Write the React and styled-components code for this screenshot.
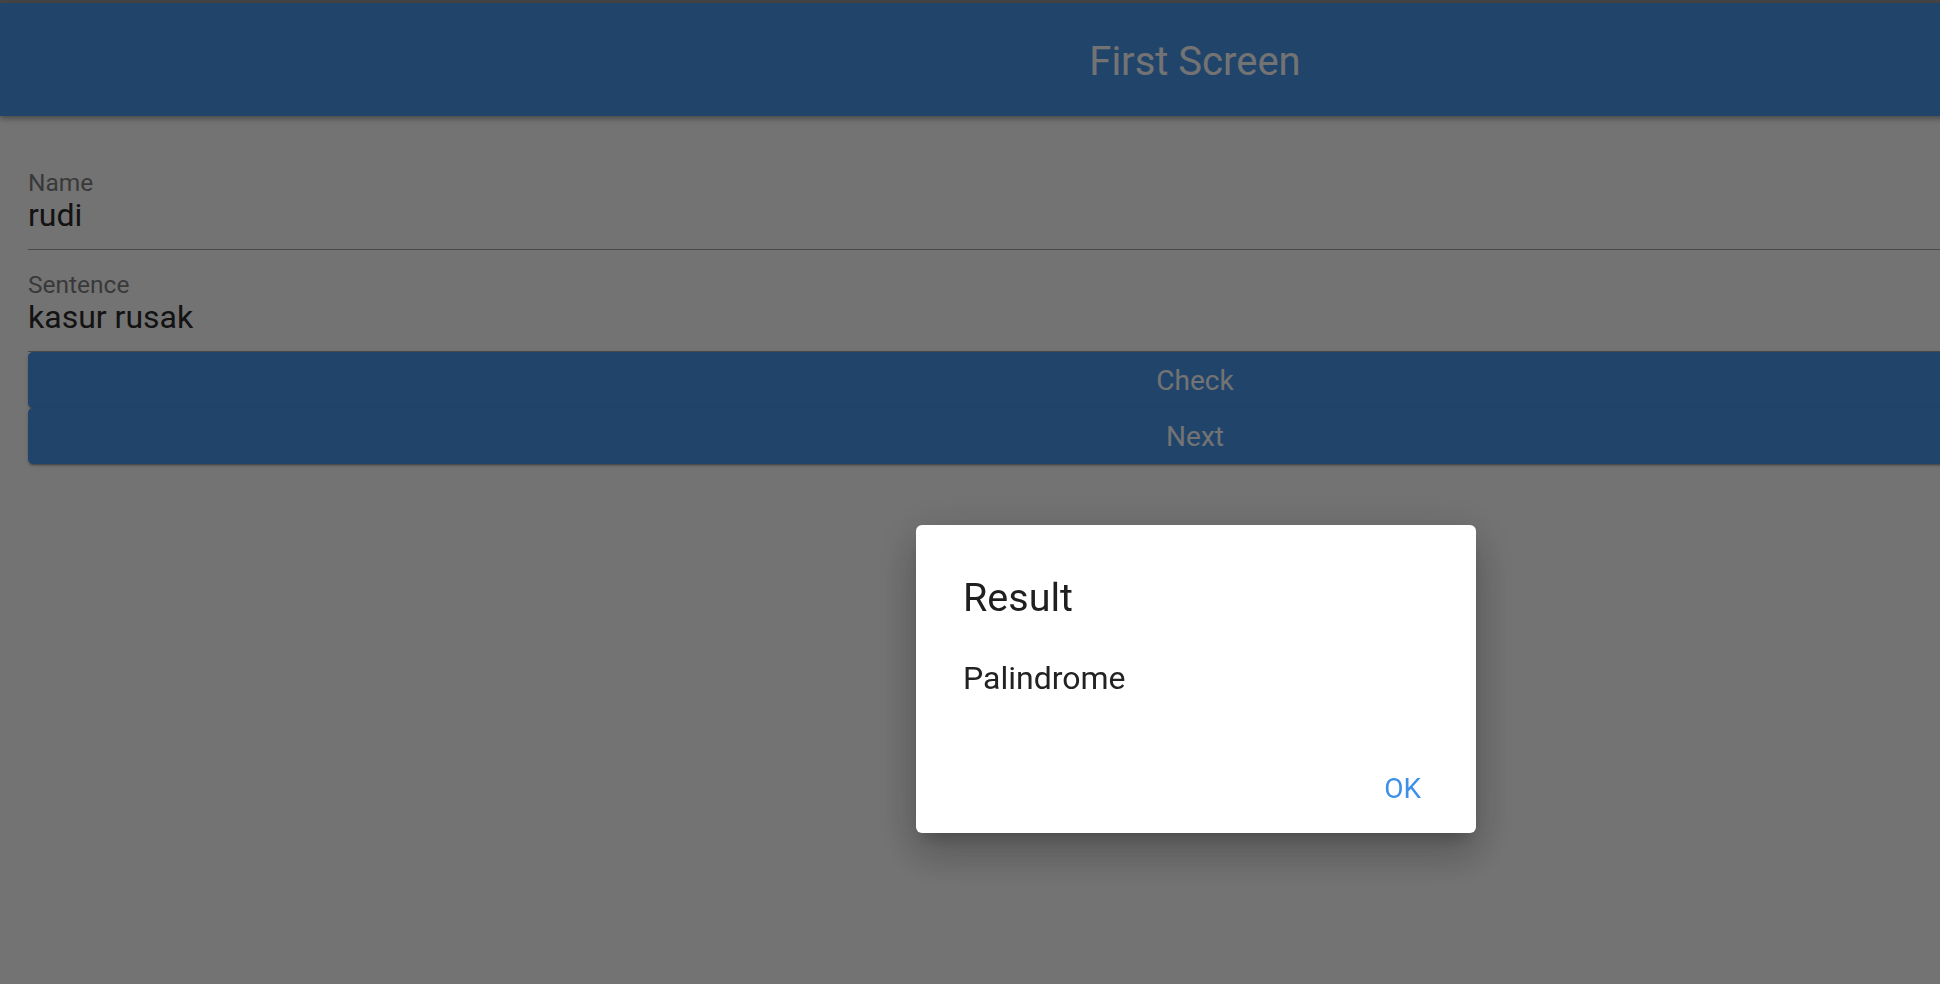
import React from "react";
import styled, { createGlobalStyle } from "styled-components";

const GlobalStyle = createGlobalStyle`
  html, body {
    margin: 0;
    padding: 0;
    overflow: hidden;
    background: #ffffff;
  }
  body {
    font-family: Roboto, "Noto Sans", "Liberation Sans", sans-serif;
  }
`;

const Page = styled.div`
  width: 2390px;
  min-height: 984px;
  border-top: 3px solid #9c9c9c;
  background: #ffffff;
  display: flex;
  flex-direction: column;
`;

const AppBar = styled.header`
  height: 113px;
  background: #4997ee;
  color: #ffffff;
  display: flex;
  align-items: center;
  justify-content: center;
  font-size: 40px;
  padding-top: 3px;
  box-sizing: border-box;
  box-shadow: 0 2px 4px -1px rgba(0, 0, 0, 0.2), 0 4px 5px 0 rgba(0, 0, 0, 0.14),
    0 1px 10px 0 rgba(0, 0, 0, 0.12);
  position: relative;
  z-index: 1;
`;

const Body = styled.main`
  padding: 32px 28px 0 28px;
  display: flex;
  flex-direction: column;
`;

const Field = styled.label`
  display: flex;
  flex-direction: column;
  padding: 21px 0 16px;
  border-bottom: 1px solid #a5a5a5;
`;

const FieldLabel = styled.span`
  font-size: 24.5px;
  line-height: 28px;
  color: #7f7f7f;
`;

const FieldValue = styled.span`
  font-size: 32px;
  line-height: 36px;
  color: #2a2a2a;
`;

const ActionButton = styled.button`
  height: 56px;
  width: 100%;
  border: none;
  border-radius: 5px;
  background: #4997ee;
  color: #ffffff;
  font-family: inherit;
  font-size: 28px;
  font-weight: 400;
  cursor: pointer;
  box-shadow: 0 3px 1px -2px rgba(0, 0, 0, 0.2), 0 2px 2px 0 rgba(0, 0, 0, 0.14),
    0 1px 5px 0 rgba(0, 0, 0, 0.12);
`;

const Barrier = styled.div`
  position: fixed;
  inset: 0;
  background: rgba(0, 0, 0, 0.55);
  z-index: 10;
`;

const Dialog = styled.div`
  position: absolute;
  left: 916px;
  top: 525px;
  width: 560px;
  height: 308px;
  box-sizing: border-box;
  background: #ffffff;
  border-radius: 6px;
  display: flex;
  flex-direction: column;
  padding-top: 49px;
  box-shadow: 0 11px 15px -7px rgba(0, 0, 0, 0.2),
    0 24px 38px 3px rgba(0, 0, 0, 0.14), 0 9px 46px 8px rgba(0, 0, 0, 0.12);
`;

const DialogTitle = styled.h2`
  margin: 0;
  padding: 0 47px;
  font-size: 39.5px;
  font-weight: 400;
  line-height: 48px;
  color: #1f1f1f;
`;

const DialogContent = styled.p`
  margin: 36px 0 0;
  padding: 0 47px;
  font-size: 32px;
  line-height: 40px;
  color: #222222;
`;

const DialogActions = styled.div`
  margin-top: auto;
  display: flex;
  justify-content: flex-end;
  padding: 0 39px 11px;
`;

const TextButton = styled.button`
  border: none;
  background: transparent;
  color: #3d8fe9;
  font-family: inherit;
  font-size: 28px;
  font-weight: 400;
  line-height: 36px;
  padding: 15px 16px;
  cursor: pointer;
`;

const fields = [
  { label: "Name", value: "rudi" },
  { label: "Sentence", value: "kasur rusak" },
];

export default function App() {
  return (
    <>
      <GlobalStyle />
      <Page>
        <AppBar>First Screen</AppBar>
        <Body>
          {fields.map((f) => (
            <Field key={f.label}>
              <FieldLabel>{f.label}</FieldLabel>
              <FieldValue>{f.value}</FieldValue>
            </Field>
          ))}
          <ActionButton>Check</ActionButton>
          <ActionButton>Next</ActionButton>
        </Body>
      </Page>
      <Barrier>
        <Dialog role="dialog">
          <DialogTitle>Result</DialogTitle>
          <DialogContent>Palindrome</DialogContent>
          <DialogActions>
            <TextButton>OK</TextButton>
          </DialogActions>
        </Dialog>
      </Barrier>
    </>
  );
}
